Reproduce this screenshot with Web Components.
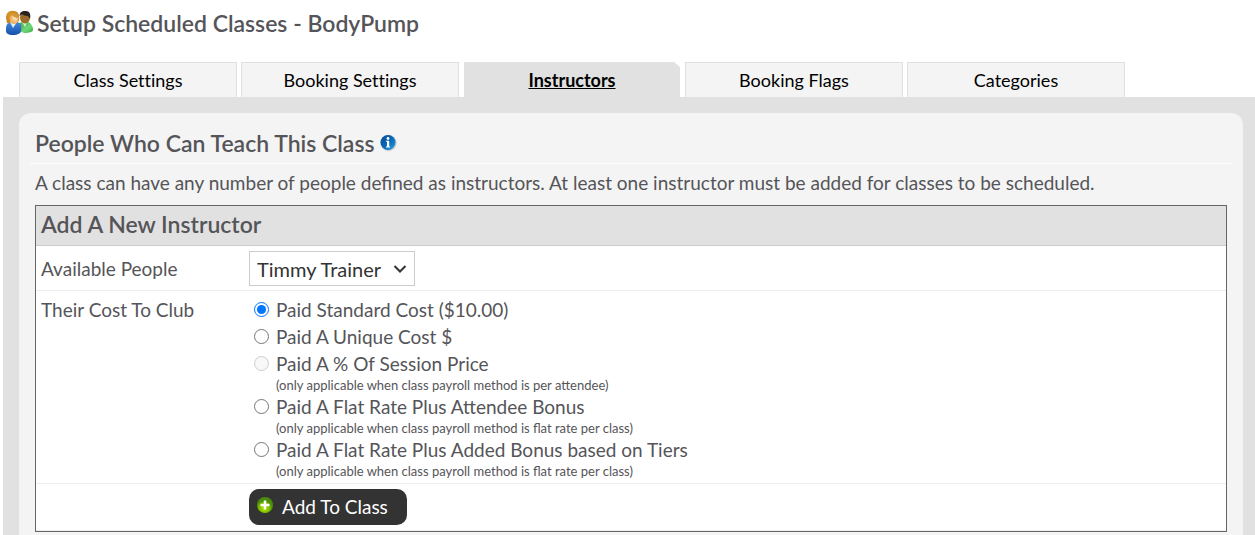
<!DOCTYPE html>
<html lang="en">
<head>
<meta charset="utf-8">
<meta name="viewport" content="width=device-width, initial-scale=1">
<title>Setup Scheduled Classes - BodyPump</title>
<style>
  body { margin: 0; background: #fff; color: #555559; font: 19px/24px Lato, "Open Sans", sans-serif; overflow-x: hidden; }
</style>
</head>
<body>
<class-setup-page>
  <page-title slot="title">Setup Scheduled Classes - BodyPump</page-title>
  <tab-bar slot="tabs">
    <tab-link href="#settings">Class Settings</tab-link>
    <tab-link href="#booking">Booking Settings</tab-link>
    <tab-link href="#instructors" active>Instructors</tab-link>
    <tab-link href="#flags">Booking Flags</tab-link>
    <tab-link href="#categories">Categories</tab-link>
  </tab-bar>
  <content-panel>
    <span slot="heading">People Who Can Teach This Class</span>
    <span slot="intro">A class can have any number of people defined as instructors. At least one instructor must be added for classes to be scheduled.</span>
    <instructor-form></instructor-form>
  </content-panel>
</class-setup-page>

<template id="class-setup-page">
  <style>
    :host { display: block; }
    main { margin-left: 3px; padding: 16px 12px 16px 16px; background: #e1e1e1; }
  </style>
  <slot name="title"></slot>
  <slot name="tabs"></slot>
  <main><slot></slot></main>
</template>

<template id="page-title">
  <style>
    :host { display: block; }
    h1 { display: flex; align-items: center; gap: 4px; margin: 0; padding: 7px 5px; font-size: 23px; line-height: 32px; font-weight: 600; }
    svg { flex: none; }
  </style>
  <h1>
    <svg width="28" height="26" viewBox="0 0 28 26" aria-hidden="true">
      <defs>
        <radialGradient id="face" cx=".6" cy=".45"><stop offset="0" stop-color="#ffe6bb"/><stop offset="1" stop-color="#efad61"/></radialGradient>
        <linearGradient id="hair" x2="1" y2="1"><stop offset="0" stop-color="#d99b2b"/><stop offset="1" stop-color="#b76c12"/></linearGradient>
        <linearGradient id="blue" y2="1" x2="0"><stop offset="0" stop-color="#4489dd"/><stop offset="1" stop-color="#1550a9"/></linearGradient>
        <linearGradient id="green" y2="1" x2="1"><stop offset="0" stop-color="#3fa44a"/><stop offset=".6" stop-color="#6fd878"/><stop offset="1" stop-color="#36a63f"/></linearGradient>
      </defs>
      <path d="M14 13l4-1h5c3 1 5 4 5 8 0 2-4 3-9 3l-5-2z" fill="url(#green)"/>
      <path d="M17 12l3 5 2-5z" fill="#dff5cc"/>
      <ellipse cx="20" cy="7.500" rx="5" ry="6" fill="#9b6c29"/>
      <path d="M14.500 6C15 1 18 1 21 1c4 0 5 4 4 8l-2-3c-3 0-5-1-6-2z" fill="#29231f"/>
      <path d="M1 8C1 3 4 0 9 1c4 0 6 4 5 9l-2 4-10-1z" fill="url(#hair)"/>
      <path d="M4 13l3-1h5c4 1 5 4 4 9 0 2-3 4-8 4s-7-2-7-4c0-4 0-7 3-8z" fill="url(#blue)"/>
      <path d="M5 12l3 6 4-6z" fill="#e4f3ff"/>
      <ellipse cx="9" cy="8.500" rx="4.500" ry="5.500" fill="url(#face)"/>
      <path d="M3 9c0-4 2-6 6-6 3 0 4 2 5 5-4 0-6-2-7-3z" fill="#d39734"/>
    </svg>
    <span><slot></slot></span>
  </h1>
</template>

<template id="tab-bar">
  <style>
    :host { display: block; }
    nav { display: flex; gap: 4px; padding: 16px 16px 0 19px; }
  </style>
  <nav aria-label="Class setup"><slot></slot></nav>
</template>

<template id="tab-link">
  <style>
    :host { display: block; flex: 0 1 218px; min-width: 0; }
    a { display: block; box-sizing: border-box; height: 35px; padding-top: 5px; border: 1px solid #e0e0e0; border-bottom: 0; background: #f4f4f4; color: #000; font-size: 18px; line-height: 24px; text-align: center; text-decoration: none; white-space: nowrap; font-variant-ligatures: none; }
    :host([active]) a { border-color: #e1e1e1; background: #e1e1e1; font-weight: 700; text-decoration: underline; clip-path: polygon(1px 0, calc(100% - 7px) 0, calc(100% - 1px) 5px, calc(100% - 1px) 100%, 1px 100%); }
  </style>
  <a><slot></slot></a>
</template>

<template id="content-panel">
  <style>
    :host { display: block; padding: 15px 16px 24px; border-radius: 12px; background: #f4f4f4; }
    h2 { display: flex; align-items: center; gap: 4px; margin: 0 -5px; padding: 0 5px 5px; border-bottom: 1px solid #fff; font-size: 23px; line-height: 30px; font-weight: 600; }
    p { margin: 0; padding: 7px 0 10px; line-height: 24px; }
  </style>
  <h2><slot name="heading"></slot>
    <svg width="18" height="18" viewBox="0 0 18 18" role="img" aria-label="Information">
      <defs><linearGradient id="info" x2="1" y2="1"><stop offset="0" stop-color="#064b91"/><stop offset=".5" stop-color="#0867b7"/><stop offset="1" stop-color="#22a2e8"/></linearGradient></defs>
      <circle cx="9.500" cy="9" r="8.300" fill="#d3d1ce"/><circle cx="9" cy="8.500" r="7.500" fill="url(#info)"/>
      <circle cx="9" cy="4.500" r="1.400" fill="#fff"/><path d="M7 6.800h3.200v5.700h1v1H7v-1h1v-4.700H7z" fill="#fff"/>
    </svg>
  </h2>
  <p><slot name="intro"></slot></p>
  <slot></slot>
</template>

<template id="instructor-form">
  <style>
    :host { display: block; }
    form { margin: 0; }
    table { width: 100%; border: 1px solid #666; border-spacing: 0; background: #fff; table-layout: fixed; }
    .label { width: 208px; }
    th, td { box-sizing: border-box; padding: 4px 5px; border-bottom: 1px solid #eee; text-align: left; vertical-align: top; font-weight: 400; }
    thead th { padding: 3px 5px 6px; border-color: #ccc; background: #e1e1e1; font-size: 23px; line-height: 30px; font-weight: 600; }
    tbody th { padding-top: 7px; }
    .person th { padding-top: 11px; }
    .person td { padding-top: 5px; }
    .picker { display: inline-grid; align-items: center; vertical-align: top; }
    .picker > * { grid-area: 1 / 1; }
    .picker svg { justify-self: end; margin-right: 8px; pointer-events: none; }
    select { appearance: none; box-sizing: border-box; height: 35px; margin: 0; padding: 0 31px 0 7px; border: 1px solid #ccc; border-radius: 0; background: #fff; color: #333; font: 20px/24px Lato, sans-serif; }
    fieldset { margin: 0; padding: 1px 0 0 5px; border: 0; }
    .option { display: grid; grid-template-columns: 15px 1fr; column-gap: 7px; align-items: start; }
    .option label { line-height: 27px; }
    .option small { grid-column: 2; font-size: 13px; line-height: 16px; }
    input { width: 15px; height: 15px; margin: 6px 0 0; }
    button { display: flex; align-items: center; gap: 8px; margin: 0; padding: 0 19px 0 7px; height: 36px; border: 0; border-radius: 10px; background: #333; color: #fff; font: 19px/24px Lato, sans-serif; }
    button svg { margin-bottom: 4px; }
    .submit td { padding: 5px; }
  </style>
  <form>
    <table>
      <colgroup><col class="label"><col></colgroup>
      <thead><tr><th colspan="2">Add A New Instructor</th></tr></thead>
      <tbody>
        <tr class="person">
          <th scope="row"><label for="person">Available People</label></th>
          <td><span class="picker">
            <select id="person"><option>Timmy Trainer</option></select>
            <svg width="14" height="10" viewBox="0 0 14 10" aria-hidden="true"><path d="M1.500 2L7 7.500 12.500 2" fill="none" stroke="#333" stroke-width="2"/></svg>
          </span></td>
        </tr>
        <tr>
          <th scope="row" id="cost-label">Their Cost To Club</th>
          <td><fieldset aria-labelledby="cost-label">
            <div class="option"><input type="radio" name="cost" id="standard" checked><label for="standard">Paid Standard Cost ($10.00)</label></div>
            <div class="option"><input type="radio" name="cost" id="unique"><label for="unique">Paid A Unique Cost $</label></div>
            <div class="option"><input type="radio" name="cost" id="percent" disabled><label for="percent">Paid A % Of Session Price</label><small>(only applicable when class payroll method is per attendee)</small></div>
            <div class="option"><input type="radio" name="cost" id="attendee"><label for="attendee">Paid A Flat Rate Plus Attendee Bonus</label><small>(only applicable when class payroll method is flat rate per class)</small></div>
            <div class="option"><input type="radio" name="cost" id="tiers"><label for="tiers">Paid A Flat Rate Plus Added Bonus based on Tiers</label><small>(only applicable when class payroll method is flat rate per class)</small></div>
          </fieldset></td>
        </tr>
        <tr class="submit">
          <td></td>
          <td><button type="button">
            <svg width="18" height="18" viewBox="0 0 18 18" aria-hidden="true">
              <defs><radialGradient id="add" cx=".45" cy=".7"><stop offset="0" stop-color="#b6e900"/><stop offset=".65" stop-color="#7bbb00"/><stop offset="1" stop-color="#4a8c0b"/></radialGradient></defs>
              <circle cx="9" cy="9" r="8" fill="url(#add)"/><path d="M9 4.500v9M4.500 9h9" stroke="#fff" stroke-width="2.500"/>
            </svg>
            <span>Add To Class</span>
          </button></td>
        </tr>
      </tbody>
    </table>
  </form>
</template>

<script>
  class TemplateElement extends HTMLElement {
    constructor() {
      super();
      this.attachShadow({ mode: "open" }).append(
        document.getElementById(this.localName).content.cloneNode(true)
      );
    }
  }
  class TabLink extends TemplateElement {
    connectedCallback() {
      const link = this.shadowRoot.querySelector("a");
      link.href = this.getAttribute("href");
      if (this.hasAttribute("active")) link.setAttribute("aria-current", "page");
    }
  }
  customElements.define("tab-link", TabLink);
  for (const name of ["class-setup-page", "page-title", "tab-bar", "content-panel", "instructor-form"]) {
    customElements.define(name, class extends TemplateElement {});
  }
</script>
</body>
</html>
